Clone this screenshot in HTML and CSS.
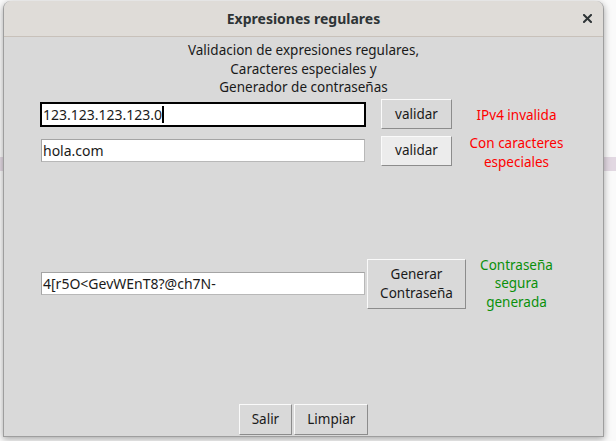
FILE: index.html
```html
<!DOCTYPE html>
<html lang="es">
<head>
<meta charset="utf-8">
<title>Expresiones regulares</title>
<link rel="stylesheet" href="styles.css">
</head>
<body>
<div class="window">
  <div class="titlebar">
    <span></span>
    <span class="title">Expresiones regulares</span>
    <span class="close">
      <svg width="9" height="9" viewBox="0 0 9 9"><path d="M1 1 L8 8 M8 1 L1 8" stroke="#2e3436" stroke-width="2" stroke-linecap="square" fill="none"/></svg>
    </span>
  </div>
  <div class="content">
    <div class="header">Validacion de expresiones regulares,<br>Caracteres especiales y<br>Generador de contraseñas</div>

    <div class="row row1">
      <div class="field focused">123.123.123.123.0<span class="caret"></span></div>
      <div class="btn">validar</div>
      <div class="msg red one">IPv4 invalida</div>
    </div>

    <div class="row row2">
      <div class="field lift">hola.com</div>
      <div class="btn active lift">validar</div>
      <div class="msg red">Con caracteres<br>especiales</div>
    </div>

    <div class="row row3">
      <div class="field">4[r5O&lt;GevWEnT8?@ch7N-</div>
      <div class="btn big">Generar<br>Contraseña</div>
      <div class="msg green">Contraseña<br>segura<br>generada</div>
    </div>

    <div class="footer">
      <div class="btn small">Salir</div>
      <div class="btn small">Limpiar</div>
    </div>
  </div>
</div>
</body>
</html>
```

FILE: styles.css
```css
* { box-sizing: border-box; }
html, body { margin: 0; }
body {
  width: 616px;
  height: 441px;
  overflow: hidden;
  padding: 1px 0 0 3px;
  background: linear-gradient(#fafafa 157px, #e2d8e2 157px, #e2d8e2 171px, #fafafa 171px);
  font-family: "Noto Sans", sans-serif;
}
.window {
  width: 601px;
  height: 436px;
  display: flex;
  flex-direction: column;
  background: #d9d9d9;
  border: 1px solid #9e9e9e;
  border-top: none;
  border-radius: 8px 8px 0 0;
  box-shadow: 0 2px 7px rgba(0,0,0,0.35);
  overflow: hidden;
}
.titlebar {
  flex: none;
  height: 36px;
  background: #dfdcd8;
  border-bottom: 1px solid #c8c1ba;
  display: grid;
  grid-template-columns: 1fr auto 1fr;
  align-items: center;
}
.title {
  font-size: 14px;
  font-weight: 700;
  color: #2e3436;
}
.close {
  justify-self: end;
  margin-right: 11px;
  display: flex;
}
.content {
  flex: 1;
  display: flex;
  flex-direction: column;
  padding-top: 4px;
  color: #1a1a1a;
  font-size: 13.5px;
}
.header {
  text-align: center;
  line-height: 18.7px;
}
.row {
  display: grid;
  grid-template-columns: 327px 99px 101px;
  align-items: center;
  padding-left: 36px;
}
.row1 { margin-top: 2px; height: 30px; }
.row2 { margin-top: 5px; }
.row3 { margin-top: 84px; }
.field {
  width: 324px;
  height: 23px;
  margin-left: 1px;
  background: #fff;
  border: 1px solid #b8b8b8;
  border-top-color: #a4a4a4;
  border-left-color: #a4a4a4;
  padding: 0 1px;
  font-size: 14px;
  line-height: 21px;
  white-space: nowrap;
  display: flex;
  align-items: center;
}
.field.focused {
  width: 326px;
  height: 25px;
  margin-left: 0;
  border: 2px solid #000;
}
.caret {
  width: 2px;
  height: 17px;
  background: #000;
  margin-left: 0;
}
.lift { margin-bottom: 4px; }
.btn {
  justify-self: center;
  width: 71px;
  height: 30px;
  display: flex;
  align-items: center;
  justify-content: center;
  text-align: center;
  background: #d9d9d9;
  border: 1px solid;
  border-color: #fafafa #8c8c8c #8c8c8c #fafafa;
  line-height: 18.7px;
}
.btn.active { background: #ececec; }
.btn.big { width: 99px; height: 50px; }
.msg {
  text-align: center;
  line-height: 18.7px;
}
.msg.one { margin-top: 3px; }
.red { color: #ff0000; }
.green { color: #0a900a; }
.footer {
  margin-top: auto;
  margin-bottom: 1px;
  display: flex;
  justify-content: center;
  gap: 2px;
}
.btn.small { width: auto; padding: 0 12px; height: 31px; }
```
